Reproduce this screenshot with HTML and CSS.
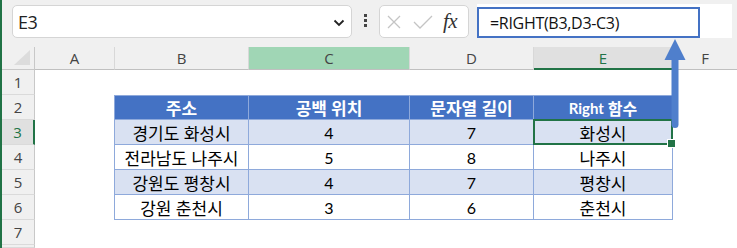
FILE: index.html
```html
<!DOCTYPE html>
<html lang="ko">
<head>
<meta charset="utf-8">
<link rel="stylesheet" href="styles.css">
</head>
<body>
<div class="app">
  <div class="fbar">
    <div class="namebox">
      <span class="nbtext">E3</span>
      <svg class="chev" width="12" height="8" viewBox="0 0 12 8"><path d="M1.5 1.5 L6 6 L10.5 1.5" fill="none" stroke="#222" stroke-width="1.8"/></svg>
    </div>
    <div class="dots"><i></i><i></i><i></i></div>
    <div class="fnbtns">
      <svg width="14" height="14" viewBox="0 0 14 14"><path d="M1 1 L13 13 M13 1 L1 13" stroke="#c4c4c4" stroke-width="1.3" fill="none"/></svg>
      <svg width="20" height="14" viewBox="0 0 20 14"><path d="M1 7 L7 13 L19 1" stroke="#c4c4c4" stroke-width="1.3" fill="none"/></svg>
      <span class="fx">fx</span>
    </div>
    <div class="formula">
      <div class="fbox">=RIGHT(B3,D3-C3)</div>
    </div>
  </div>
  <div class="sheet">
    <div class="corner"><svg width="17" height="16" viewBox="0 0 17 16"><polygon points="16,0 16,15 0,15" fill="#dcdcdc"/></svg></div>
    <div class="ch">A</div>
    <div class="ch">B</div>
    <div class="ch ch-green">C</div>
    <div class="ch">D</div>
    <div class="ch ch-sel">E</div>
    <div class="ch ch-last">F</div>

    <div class="rh">1</div>
    <div class="c"></div><div class="c"></div><div class="c"></div><div class="c"></div><div class="c"></div><div class="c"></div>

    <div class="rh">2</div>
    <div class="c"></div>
    <div class="t th tl">주소</div>
    <div class="t th">공백 위치</div>
    <div class="t th">문자열 길이</div>
    <div class="t th th-e"><span class="lat">Right</span>&nbsp;함수</div>
    <div class="c"></div>

    <div class="rh rh-sel">3</div>
    <div class="c"></div>
    <div class="t band tl">경기도 화성시</div>
    <div class="t band num">4</div>
    <div class="t band num">7</div>
    <div class="t band sel">화성시</div>
    <div class="c"></div>

    <div class="rh">4</div>
    <div class="c"></div>
    <div class="t tl">전라남도 나주시</div>
    <div class="t num">5</div>
    <div class="t num">8</div>
    <div class="t">나주시</div>
    <div class="c"></div>

    <div class="rh">5</div>
    <div class="c"></div>
    <div class="t band tl">강원도 평창시</div>
    <div class="t band num">4</div>
    <div class="t band num">7</div>
    <div class="t band">평창시</div>
    <div class="c"></div>

    <div class="rh">6</div>
    <div class="c"></div>
    <div class="t tl">강원 춘천시</div>
    <div class="t num">3</div>
    <div class="t num">6</div>
    <div class="t">춘천시</div>
    <div class="c"></div>

    <div class="rh">7</div>
    <div class="c"></div><div class="c"></div><div class="c"></div><div class="c"></div><div class="c"></div><div class="c"></div>

    <div class="rh"></div>
    <div class="c"></div><div class="c"></div><div class="c"></div><div class="c"></div><div class="c"></div><div class="c"></div>
  </div>
  <svg class="arrow" width="30" height="95" viewBox="660 36 30 95">
    <polygon points="675,39 685.5,60 664.5,60" fill="#4f7fcc"/>
    <path d="M671.5 59 H678.5 V124.5 A3.5 3.5 0 0 1 671.5 124.5 Z" fill="#4f7fcc"/>
  </svg>
</div>
</body>
</html>
```

FILE: styles.css
```css
* { box-sizing: border-box; }
html, body { margin: 0; padding: 0; }
body {
  width: 737px;
  height: 248px;
  overflow: hidden;
  background: #f0f0f0;
  font-family: "Open Sans", "Noto Sans", sans-serif;
}
.app {
  position: relative;
  height: 248px;
  border-left: 2px solid #217346;
  background: #f0f0f0;
}
.fbar {
  display: flex;
  align-items: flex-start;
  height: 47px;
}
.namebox {
  margin: 5px 0 0 10px;
  width: 340px;
  height: 33px;
  background: #fff;
  border: 1px solid #d5d5d5;
  border-radius: 5px;
  display: flex;
  align-items: center;
  justify-content: space-between;
  padding: 0 6px 0 5px;
}
.nbtext {
  font-size: 18px;
  color: #222;
  letter-spacing: -0.5px;
}
.chev { margin-top: 2px; }
.dots {
  width: 27px;
  height: 47px;
  display: flex;
  flex-direction: column;
  align-items: center;
  justify-content: center;
  gap: 2px;
  padding-bottom: 6px;
}
.dots i {
  display: block;
  width: 3px;
  height: 3px;
  background: #444;
}
.fnbtns {
  margin-top: 5px;
  width: 90px;
  height: 33px;
  background: #fff;
  border: 1px solid #d5d5d5;
  border-radius: 5px;
  display: flex;
  align-items: center;
  padding-left: 7px;
  gap: 12px;
}
.fx {
  font-family: "Liberation Serif", "DejaVu Serif", serif;
  font-style: italic;
  font-size: 21px;
  color: #333;
  margin-left: -2px;
  letter-spacing: -0.5px;
}
.formula {
  margin: 4px 0 0 8px;
  width: 255px;
  height: 34px;
  background: #fff;
}
.fbox {
  margin-top: 3px;
  width: 223px;
  height: 31px;
  border: 2px solid #4472c4;
  padding-left: 11px;
  display: flex;
  align-items: center;
  font-family: "Open Sans", "Noto Sans", sans-serif;
  font-size: 16px;
  color: #111;
  letter-spacing: -0.3px;
}
.sheet {
  display: grid;
  grid-template-columns: 33px 80px 134px 161px 124px 139px 1fr;
  grid-template-rows: 23px repeat(7, 25px) 1fr;
  height: 201px;
  background: #fff;
}
.corner {
  background: #f0f0f0;
  border-right: 1px solid #c8c8c8;
  border-bottom: 1px solid #c8c8c8;
  display: flex;
  align-items: flex-end;
  justify-content: flex-end;
  padding: 0 3px 3px 0;
}
.ch {
  background: #f0f0f0;
  border-right: 1px solid #d8d8d8;
  border-bottom: 1px solid #c0c0c0;
  display: flex;
  align-items: center;
  justify-content: center;
  font-size: 15px;
  color: #444;
}
.ch-last { border-right: none; }
.ch-green { background: #a0d6b5; }
.ch-sel {
  background: #e0e0e0;
  color: #217346;
  border-bottom: 2px solid #217346;
}
.rh {
  background: #f0f0f0;
  border-right: 1px solid #c8c8c8;
  border-bottom: 1px solid #dadada;
  display: flex;
  align-items: center;
  justify-content: center;
  font-size: 15px;
  color: #444;
}
.rh-sel {
  background: #e0e0e0;
  color: #217346;
  border-right: 2px solid #217346;
}
.c { background: #fff; }
.t {
  background: #fff;
  border-right: 1px solid #8ea9db;
  border-bottom: 1px solid #8ea9db;
  display: flex;
  align-items: center;
  justify-content: center;
  font-family: "Lato", "Noto Sans CJK KR", sans-serif;
  font-size: 17px;
  color: #000;
  white-space: nowrap;
}
.tl { border-left: 1px solid #8ea9db; margin-left: -1px; }
.th {
  background: #4472c4;
  color: #fff;
  font-weight: bold;
  border-top: 1px solid #8ea9db;
}
.th-e { font-size: 16px; }
.lat { font-family: "Lato", sans-serif; font-size: 15px; }
.band { background: #d9e1f2; }
.num { font-size: 16px; }
.sel { position: relative; }
.sel::after {
  content: "";
  position: absolute;
  left: -1px;
  top: -1px;
  right: -1px;
  bottom: -1px;
  border: 2px solid #217346;
}
.sel::before {
  content: "";
  position: absolute;
  right: -4px;
  bottom: -4px;
  width: 7px;
  height: 7px;
  background: #217346;
  border: 1px solid #fff;
  z-index: 2;
}
.arrow {
  position: absolute;
  left: 658px;
  top: 36px;
}
```
